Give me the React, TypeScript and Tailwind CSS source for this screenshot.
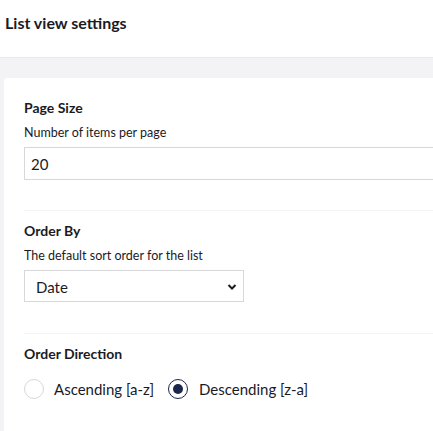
import { useState } from "react";

export default function App() {
  const [direction, setDirection] = useState<"asc" | "desc">("desc");

  return (
    <div className="flex h-[431px] w-[433px] flex-col overflow-hidden bg-[#f3f3f5] text-[#1b1b1f] font-['Lato','Open_Sans',sans-serif]">
      {/* Header */}
      <div className="flex h-[58px] shrink-0 items-center border-b border-[#e9e9eb] bg-white px-[5px] pb-[12px]">
        <h1 className="text-[16px] font-bold">List view settings</h1>
      </div>

      {/* Card */}
      <div className="flex-1 pl-[4px] pt-[20px]">
        <div className="h-full w-[460px] rounded-tl-[3px] bg-white px-[20px] pt-[20px]">
          {/* Page Size */}
          <div className="border-b border-[#f3f3f5] pb-[30px]">
            <div className="text-[14px] font-bold leading-[20px]">Page Size</div>
            <div className="mt-[6px] text-[12.5px] leading-[18px]">Number of items per page</div>
            <input
              defaultValue="20"
              className="mt-[5px] block h-[33px] w-full border border-[#d8d7d9] px-[6px] text-[15px] outline-none"
            />
          </div>

          {/* Order By */}
          <div className="border-b border-[#f3f3f5] pb-[31px] pt-[10px]">
            <div className="text-[14px] font-bold leading-[20px]">Order By</div>
            <div className="mt-[6px] text-[12.5px] leading-[18px]">The default sort order for the list</div>
            <div className="relative mt-[5px] h-[32px] w-[220px] border border-[#d8d7d9]">
              <span className="absolute left-[11px] top-[5px] text-[15px]">Date</span>
              <svg
                className="absolute right-[6px] top-[12px]"
                width="10"
                height="8"
                viewBox="0 0 10 8"
              >
                <path d="M1.5 2 L5 5.5 L8.5 2" fill="none" stroke="#1b1b1f" strokeWidth="2" />
              </svg>
            </div>
          </div>

          {/* Order Direction */}
          <div className="pt-[10px]">
            <div className="text-[14px] font-bold leading-[20px]">Order Direction</div>
            <div className="mt-[14px] flex items-center">
              <button
                onClick={() => setDirection("asc")}
                className="flex items-center"
              >
                <Radio checked={direction === "asc"} />
                <span className="ml-[10px] text-[15px]">Ascending [a-z]</span>
              </button>
              <button
                onClick={() => setDirection("desc")}
                className="ml-[14px] flex items-center"
              >
                <Radio checked={direction === "desc"} />
                <span className="ml-[11px] text-[15px]">Descending [z-a]</span>
              </button>
            </div>
          </div>
        </div>
      </div>
    </div>
  );
}

function Radio({ checked }: { checked: boolean }) {
  return (
    <span
      className={`flex h-[20px] w-[20px] items-center justify-center rounded-full border ${
        checked ? "border-[#1b264f]" : "border-[#d8d7d9]"
      }`}
    >
      {checked && <span className="h-[10px] w-[10px] rounded-full bg-[#1b264f]" />}
    </span>
  );
}
